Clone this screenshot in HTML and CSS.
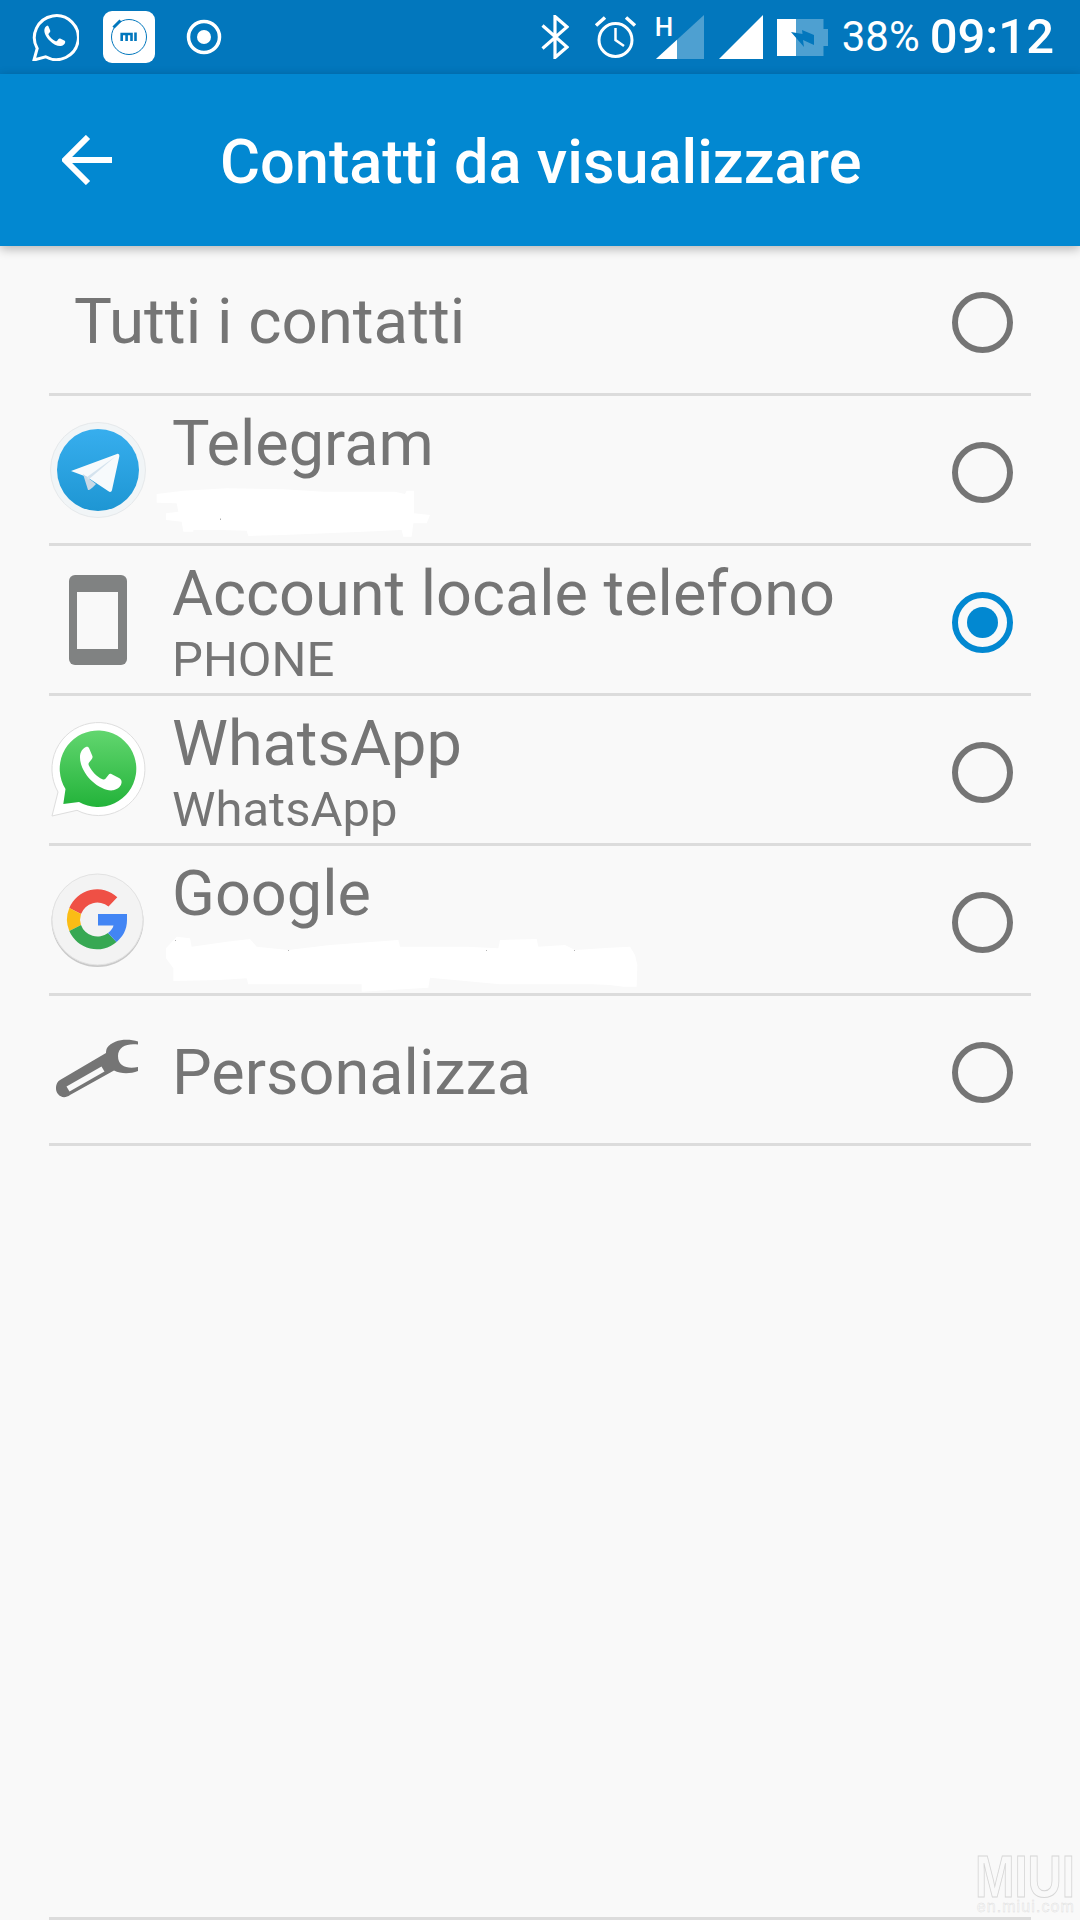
FILE: index.html
```html
<!DOCTYPE html>
<html lang="it">
<head>
<meta charset="utf-8">
<title>Contatti da visualizzare</title>
<link rel="stylesheet" href="styles.css">
</head>
<body>
<div class="screen">
  <header class="status">
    <div class="status-left">
      <svg class="ic-wa" viewBox="0 0 48 48"><path d="M3 47l3.200-11.600A22 22 0 1 1 14.600 43.800Z" fill="none" stroke="#fff" stroke-width="3"/><path d="M17 12.500c-1.300 0-3 1.500-3.500 3.500-.8 3.500 1.500 8 5 11.500 4 4 8.500 6 11.500 5.500 2.500-.4 4-2.200 4.200-3.800.1-.8-.2-1.200-1-1.600l-4-2c-.7-.3-1.200-.2-1.700.4l-1.500 1.900c-.4.500-.8.500-1.400.3-3-1.300-5.500-3.700-7-6.500-.3-.5-.2-.9.200-1.300l1.200-1.400c.4-.5.400-1 .2-1.500l-1.700-4c-.3-.7-.7-1-1.500-1Z" fill="#fff"/></svg>
      <svg class="ic-mi" viewBox="0 0 52 52"><rect width="52" height="52" rx="9" fill="#fff"/><circle cx="26" cy="26" r="17.500" fill="none" stroke="#0277bd" stroke-width="1"/><path d="M10.500 16.500L17.500 9.500" stroke="#0277bd" stroke-width="3" fill="none"/><path d="M18.700 30V23H28.500V30M23.600 24V30M32.500 21.500V30" stroke="#0277bd" stroke-width="2.600" fill="none"/></svg>
      <svg class="ic-rec" viewBox="0 0 36 36"><circle cx="18" cy="18" r="15.500" fill="none" stroke="#fff" stroke-width="3.500"/><circle cx="18" cy="18" r="7" fill="#fff"/></svg>
    </div>
    <div class="status-right">
      <svg class="ic-bt" viewBox="0 0 28 44"><path d="M1.500 10.500L26 32 14 42.500V1.500L26 12 1.500 33.500" fill="none" stroke="#fff" stroke-width="3.200"/></svg>
      <svg class="ic-alarm" viewBox="0 0 43 44"><circle cx="21.500" cy="25" r="16.500" fill="none" stroke="#fff" stroke-width="3"/><path d="M21.500 13V25L30 31" fill="none" stroke="#fff" stroke-width="2.500"/><path d="M2 10.500L11 2.500M41 10.500L32 2.500" stroke="#fff" stroke-width="3.500" fill="none"/></svg>
      <div class="sig-wrap">
        <svg class="ic-sig1" viewBox="0 0 48 44"><path d="M48 0V44H0Z" fill="#fff" fill-opacity=".3"/><path d="M21 24.800V44H0Z" fill="#fff"/></svg>
        <span class="net-type">H</span>
      </div>
      <svg class="ic-sig2" viewBox="0 0 44 44"><path d="M44 0V44H0Z" fill="#fff"/></svg>
      <svg class="ic-bat" viewBox="0 0 51 37"><path d="M0 0H46.500V10H51V27H46.500V37H0Z" fill="#fff" fill-opacity=".3"/><path d="M0 0H19V37H0Z" fill="#fff"/><path d="M14 13L27 28 26 21 37 26V16L25 11 25.500 15Z" fill="#0277bd"/></svg>
      <span class="battery">38%</span>
      <span class="clock">09:12</span>
    </div>
  </header>
  <div class="toolbar">
    <svg class="ic-back" viewBox="0 0 50 50"><path d="M50 25H3M26 2L3 25 26 48" fill="none" stroke="#fff" stroke-width="6"/></svg>
    <h1 class="title">Contatti da visualizzare</h1>
  </div>
  <main class="list">
    <div class="row row-all">
      <div class="all-label">Tutti i contatti</div>
      <span class="radio"></span>
    </div>
    <div class="row">
      <div class="icon">
        <svg class="app-icon" viewBox="0 0 96 96">
          <defs><linearGradient id="tg" x1="0" y1="0" x2="0" y2="1"><stop offset="0" stop-color="#37aeee"/><stop offset="1" stop-color="#1e96d3"/></linearGradient></defs>
          <circle cx="48" cy="48" r="47.500" fill="#f1f5f7" stroke="#e6e9eb"/>
          <circle cx="48" cy="48" r="41" fill="url(#tg)"/>
          <path d="M21 49L67 32c1.500-.5 2.700.5 2.300 2.500L62 68c-.4 2-2 2.400-3.500 1.300L37 55Z" fill="#f7fafc"/>
          <path d="M33 52L38 68C40 68 42 66 46 62L37 55Z" fill="#c9d9e6"/>
          <path d="M37 55L66 34 38 58Z" fill="#d5e3ee"/>
        </svg>
      </div>
      <div class="text">
        <div class="name">Telegram</div>
        <svg class="redact redact-tg" viewBox="0 0 870 195"><path d="M20 42L100 32 230 25 400 28 520 35 735 35 765 42 770 32 792 32 792 100 840 105 830 130 790 130 785 170 760 170 755 150 640 155 400 165 295 168 290 152 215 150 130 150 130 155 100 155 95 125 48 120 48 100 85 95 80 70 20 68Z" fill="#fff"/><rect x="210" y="116" width="3" height="3" fill="#8a8a8a"/></svg>
      </div>
      <span class="radio"></span>
    </div>
    <div class="row">
      <div class="icon">
        <svg class="phone-icon" viewBox="0 0 58 90"><rect width="58" height="90" rx="6" fill="#808282"/><rect x="8" y="17" width="41" height="57" fill="#f9f9f9"/></svg>
      </div>
      <div class="text">
        <div class="name">Account locale telefono</div>
        <div class="sub">PHONE</div>
      </div>
      <span class="radio radio-on"></span>
    </div>
    <div class="row">
      <div class="icon">
        <svg class="app-icon" viewBox="0 0 96 96">
          <defs><linearGradient id="wa" x1="0" y1="0" x2="0" y2="1"><stop offset="0" stop-color="#62d66f"/><stop offset="1" stop-color="#23b33a"/></linearGradient></defs>
          <path d="M2 94L8 70A46.500 46.500 0 1 1 27 88.300Z" fill="#fff" stroke="#dedede" stroke-width="1"/>
          <path d="M13.300 82L15.500 67A38.300 38.300 0 1 1 29 80Z" fill="url(#wa)"/>
          <path transform="translate(7 2) scale(.85 .92)" d="M34 25c-3 1-7 5-7 11 0 10 7 20 14 26 8 7 18 11 25 10 6-1 10-5 10-9 0-2-1-3-2.500-4l-9-4.500c-2-1-3-.5-4 .8l-3.500 4.200c-1 1-2 1-3.500.5-7-3-13-9-16-15-.7-1.500-.5-2.500.5-3.500l3-3.500c1-1.200 1-2.500.5-3.500L38 27c-.7-2-2.300-2.500-4-2Z" fill="#fff"/>
        </svg>
      </div>
      <div class="text">
        <div class="name">WhatsApp</div>
        <div class="sub">WhatsApp</div>
      </div>
      <span class="radio"></span>
    </div>
    <div class="row">
      <div class="icon">
        <svg class="app-icon" viewBox="0 0 96 96">
          <circle cx="47.500" cy="49" r="46" fill="#c9c9c9"/>
          <circle cx="47.500" cy="47.500" r="45.500" fill="#f3f3f3" stroke="#e2e2e2"/>
          <path d="M67.300 25.200A30 30 0 0 0 19.300 36L31 42A17.500 17.500 0 0 1 58.500 34.500Z" fill="#ef5045"/>
          <path d="M19.300 36A30 30 0 0 0 19.300 59L31 53A17.500 17.500 0 0 1 31 42Z" fill="#fbbc15"/>
          <path d="M19.300 59A30 30 0 0 0 66.500 70L58 61A17.500 17.500 0 0 1 31 53Z" fill="#37a853"/>
          <path d="M48 42H77V48C77 58 72.500 65 66.500 70L58 61C61 58.500 63 56 63.500 53.500H48Z" fill="#4285f4"/>
        </svg>
      </div>
      <div class="text">
        <div class="name">Google</div>
        <svg class="redact redact-g" viewBox="0 0 1500 210"><path d="M48 70L80 35 120 40 125 65 230 50 300 42 320 65 415 75 540 60 745 45 750 65 950 65 1045 70 1050 45 1160 42 1165 65 1245 60 1275 75 1380 68 1440 65 1455 90 1462 120 1460 185 1420 185 1380 180 1330 178 1050 178 840 158 835 188 635 200 635 178 295 178 290 160 210 165 70 168 70 130 48 100Z" fill="#fff"/><path d="M75 45h3v3h-3ZM414 75h3v3h-3ZM1008 75h3v3h-3ZM1272 75h3v3h-3Z" fill="#b5b5b5"/></svg>
      </div>
      <span class="radio"></span>
    </div>
    <div class="row row-single">
      <div class="icon">
        <svg class="wrench" viewBox="0 0 84 62"><path d="M82 2.500C72-1 57 0 51 9 50 11 50 13 50 14L4 41C-1 44-1 52 2 55 5 59 10 59 14 56L58 31.500C65 35 74 35 82 32V28C72 30 62 28 62 17 62 7 72 4 82 5.500Z" fill="#757575"/><path d="M12 50L47 30" stroke="#f9f9f9" stroke-width="6" fill="none"/></svg>
      </div>
      <div class="text">
        <div class="name">Personalizza</div>
      </div>
      <span class="radio"></span>
    </div>
  </main>
  <footer class="foot">
    <div class="foot-line"></div>
    <div class="miui">
      <div class="miui-big">MIUI</div>
      <div class="miui-small">en.miui.com</div>
    </div>
  </footer>
</div>
</body>
</html>
```

FILE: styles.css
```css
* { box-sizing: border-box; }
html, body { margin: 0; padding: 0; }
body { width: 1080px; height: 1920px; overflow: hidden; background: #f9f9f9; font-family: Roboto, sans-serif; }
svg { display: block; flex: none; }

.screen { position: relative; width: 1080px; height: 1920px; display: flex; flex-direction: column; background: #f9f9f9; }

.status { height: 74px; flex: none; background: #0277bd; display: flex; justify-content: space-between; align-items: center; padding: 0 26px 0 31px; color: #fff; }
.status-left { display: flex; align-items: center; }
.status-right { display: flex; align-items: center; }
.ic-wa { width: 48px; height: 48px; margin-right: 24px; }
.ic-mi { width: 52px; height: 52px; margin-right: 31px; }
.ic-rec { width: 36px; height: 36px; }
.ic-bt { width: 28px; height: 44px; margin-right: 25px; }
.ic-alarm { width: 43px; height: 44px; margin-right: 19px; }
.sig-wrap { position: relative; margin-right: 15px; }
.ic-sig1 { width: 48px; height: 44px; }
.net-type { position: absolute; left: -1px; top: 0; font-size: 26px; font-weight: 500; line-height: 24px; color: #fff; }
.ic-sig2 { width: 44px; height: 44px; margin-right: 14px; }
.ic-bat { width: 51px; height: 37px; margin-right: 14px; }
.battery { font-size: 42px; line-height: 46px; margin-right: 10px; }
.clock { font-size: 49px; font-weight: 500; line-height: 54px; }

.toolbar { height: 172px; flex: none; background: #0288d1; display: flex; align-items: center; padding-left: 62px; box-shadow: 0 3px 10px rgba(0,0,0,.28); position: relative; z-index: 1; }
.ic-back { width: 50px; height: 50px; margin-right: 108px; }
.title { margin: 4px 0 0; font-size: 61.3px; font-weight: 500; color: #fff; line-height: 70px; }

.list { margin: 0 49px; width: 982px; flex: none; }
.row { height: 150px; display: flex; align-items: stretch; border-bottom: 3px solid #dcdcdc; padding-right: 18px; position: relative; }
.row-all { align-items: center; }
.all-label { flex: 1; padding-left: 25px; padding-top: 5px; font-size: 63.6px; color: #757575; line-height: 70px; }
.icon { width: 123px; flex: none; display: flex; align-items: center; }
.app-icon { width: 96px; height: 96px; margin-left: 1px; }
.phone-icon { width: 58px; height: 90px; margin-left: 20px; }
.wrench { width: 84px; height: 62px; margin-left: 7px; }
.text { flex: 1; min-width: 0; display: flex; flex-direction: column; padding-top: 15px; }
.name { font-size: 63px; line-height: 66px; color: #757575; }
.sub { font-size: 49px; line-height: 50px; color: #757575; margin-top: 8px; }
.row-single .text { justify-content: center; padding-top: 6px; }
.redact { margin-left: -22px; }
.redact-tg { width: 290px; height: 65px; margin-top: 3px; }
.redact-g { width: 500px; height: 70px; margin-top: -2px; }

.radio { width: 61px; height: 61px; flex: none; align-self: center; margin-top: 5px; border: 6px solid #757575; border-radius: 50%; position: relative; }
.radio-on { border-color: #0288d1; }
.radio-on::after { content: ""; position: absolute; inset: 9px; border-radius: 50%; background: #0288d1; }

.foot { flex: 1; position: relative; }
.foot-line { position: absolute; left: 49px; right: 49px; bottom: 0; height: 3px; background: #dcdcdc; }
.miui { position: absolute; right: 5px; bottom: 7px; width: 100px; text-align: right; font-family: "Liberation Sans", sans-serif; }
.miui-big { width: 133px; margin-left: -33px; font-size: 60px; font-weight: 700; line-height: 44px; white-space: nowrap; transform: scaleX(.79); transform-origin: right center; -webkit-text-stroke: 1px #d6d6d6; color: #f9f9f9; }
.miui-small { margin-top: 2px; font-size: 16px; line-height: 12px; letter-spacing: 1.100px; white-space: nowrap; -webkit-text-stroke: .4px #dcdcdc; color: #f9f9f9; }
```
